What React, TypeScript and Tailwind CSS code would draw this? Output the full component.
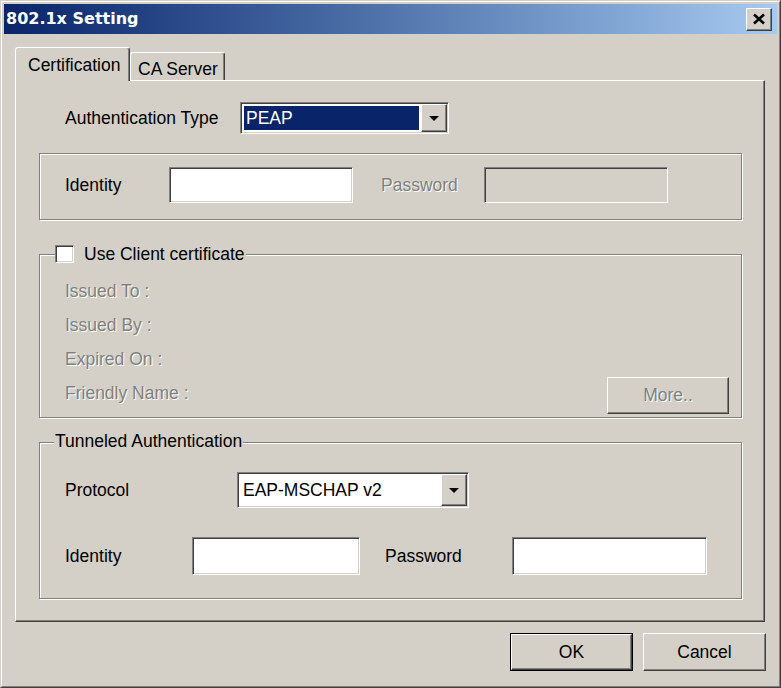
import React from 'react';

// classic win2000 3d edges
const raised =
  'border border-t-white border-l-white border-r-[#404040] border-b-[#404040] shadow-[inset_-1px_-1px_0_#808080]';
const sunken =
  'border border-t-[#808080] border-l-[#808080] border-r-white border-b-white shadow-[inset_1px_1px_0_#404040,inset_-1px_-1px_0_#d4d0c8]';
const etched = 'relative border border-[#808080] shadow-[inset_1px_1px_0_#fff,1px_1px_0_#fff]';
const disabledText = 'text-[#808080] [text-shadow:1px_1px_0_#fff]';

function DropArrow() {
  return (
    <svg width="10" height="5" viewBox="0 0 10 5">
      <polygon points="0,0 10,0 5,5" fill="#000" />
    </svg>
  );
}

function Combo({
  value,
  selected,
  className,
}: {
  value: string;
  selected?: boolean;
  className: string;
}) {
  return (
    <div className={`${sunken} bg-white flex items-stretch p-px ${className}`}>
      <div className="flex-1 flex items-stretch p-[2px]">
        <div
          className={`flex-1 flex items-center pl-[2px] ${
            selected ? 'bg-[#0a246a] text-white' : 'text-black'
          }`}
        >
          {value}
        </div>
      </div>
      <div className={`${raised} bg-[#d4d0c8] w-[26px] flex items-center justify-center`}>
        <DropArrow />
      </div>
    </div>
  );
}

function TextBox({ className, disabled }: { className: string; disabled?: boolean }) {
  return <div className={`${sunken} ${disabled ? 'bg-[#d4d0c8]' : 'bg-white'} ${className}`} />;
}

function Button({ label, className, disabled }: { label: string; className: string; disabled?: boolean }) {
  return (
    <div
      className={`${raised} bg-[#d4d0c8] flex items-center justify-center ${
        disabled ? disabledText : 'text-black'
      } ${className}`}
    >
      {label}
    </div>
  );
}

const CERT_FIELDS = ['Issued To :', 'Issued By :', 'Expired On :', 'Friendly Name :'];

export default function App() {
  return (
    <div className="w-[781px] h-[688px] bg-[#d4d0c8] border border-t-[#d4d0c8] border-l-[#d4d0c8] border-r-[#404040] border-b-[#404040] font-['Liberation_Sans',Arial,sans-serif] text-[17.5px] text-black">
      <div className="h-full border border-t-white border-l-white border-r-[#808080] border-b-[#808080] p-[2px] flex flex-col">
        {/* title bar */}
        <div className="h-[30px] flex items-center justify-between bg-linear-to-r from-[#0a246a] to-[#a6caf0] pl-[2px] pr-[5px]">
          <span className="font-['DejaVu_Sans',sans-serif] font-bold text-[16px] text-white">802.1x Setting</span>
          <div className={`${raised} bg-[#d4d0c8] w-[26px] h-[23px] flex items-center justify-center`}>
            <svg width="14" height="12" viewBox="0 0 14 12">
              <path d="M2 1.5 L12 10.5 M12 1.5 L2 10.5" stroke="#000" strokeWidth="2.6" />
            </svg>
          </div>
        </div>

        {/* tab control */}
        <div className="mt-[13px] pl-[11px] pr-[12px]">
          <div className="flex items-end h-[33px]">
            <div className="relative z-10 -mb-px h-[34px] w-[115px] bg-[#d4d0c8] rounded-t-[3px] border-t border-l border-t-white border-l-white border-r border-r-[#404040] shadow-[inset_-1px_0_0_#808080] pl-[12px] pt-[4px]">
              Certification
            </div>
            <div className="h-[28px] w-[95px] bg-[#d4d0c8] rounded-t-[3px] border-t border-l border-t-white border-l-white border-r border-r-[#404040] shadow-[inset_-1px_0_0_#808080] pl-[7px] pt-[3px]">
              CA Server
            </div>
          </div>

          <div className={`${raised} h-[542px] pt-[21px] pl-[23px] pr-[22px]`}>
            {/* authentication type */}
            <div className="flex items-center h-[32px] pl-[26px]">
              <span className="w-[175px]">Authentication Type</span>
              <Combo value="PEAP" selected className="w-[209px] h-[32px]" />
            </div>

            {/* identity group */}
            <div className={`${etched} mt-[19px] h-[67px] pt-[13px] pl-[25px] flex items-center h-[67px]`}>
              <div className="flex items-center h-[36px] self-start">
                <span className="w-[104px]">Identity</span>
                <TextBox className="w-[184px] h-[36px]" />
                <span className={`ml-[28px] w-[103px] ${disabledText}`}>Password</span>
                <TextBox disabled className="w-[184px] h-[36px]" />
              </div>
            </div>

            {/* client certificate group */}
            <div className={`${etched} mt-[34px] h-[164px] pt-[19px] pl-[25px] pr-[12px]`}>
              <div className="absolute left-[15px] -top-[11px] h-[20px] flex items-center bg-[#d4d0c8] pr-[2px]">
                <div className={`${sunken} bg-white w-[19px] h-[18px]`} />
                <span className="ml-[10px]">Use Client certificate</span>
              </div>
              {CERT_FIELDS.map((label, index) => (
                <div key={index} className="flex items-center justify-between h-[34px]">
                  <span className={disabledText}>{label}</span>
                  {index === CERT_FIELDS.length - 1 && (
                    <Button label="More.." disabled className="w-[122px] h-[37px] mt-[4px]" />
                  )}
                </div>
              ))}
            </div>

            {/* tunneled authentication group */}
            <div className={`${etched} mt-[24px] h-[157px] pt-[29px] pl-[25px]`}>
              <div className="absolute left-[14px] -top-[12px] h-[20px] flex items-center bg-[#d4d0c8] px-px">
                Tunneled Authentication
              </div>
              <div className="flex items-center h-[36px]">
                <span className="w-[172px]">Protocol</span>
                <Combo value="EAP-MSCHAP v2" className="w-[232px] h-[36px]" />
              </div>
              <div className="flex items-center h-[38px] mt-[29px]">
                <span className="w-[127px]">Identity</span>
                <TextBox className="w-[168px] h-[38px]" />
                <span className="ml-[25px] w-[127px]">Password</span>
                <TextBox className="w-[195px] h-[38px]" />
              </div>
            </div>
          </div>
        </div>

        {/* dialog buttons */}
        <div className="mt-[11px] flex justify-end gap-[10px] pr-[11px]">
          <div className="border border-black">
            <Button label="OK" className="w-[121px] h-[36px]" />
          </div>
          <Button label="Cancel" className="w-[123px] h-[38px]" />
        </div>
      </div>
    </div>
  );
}
